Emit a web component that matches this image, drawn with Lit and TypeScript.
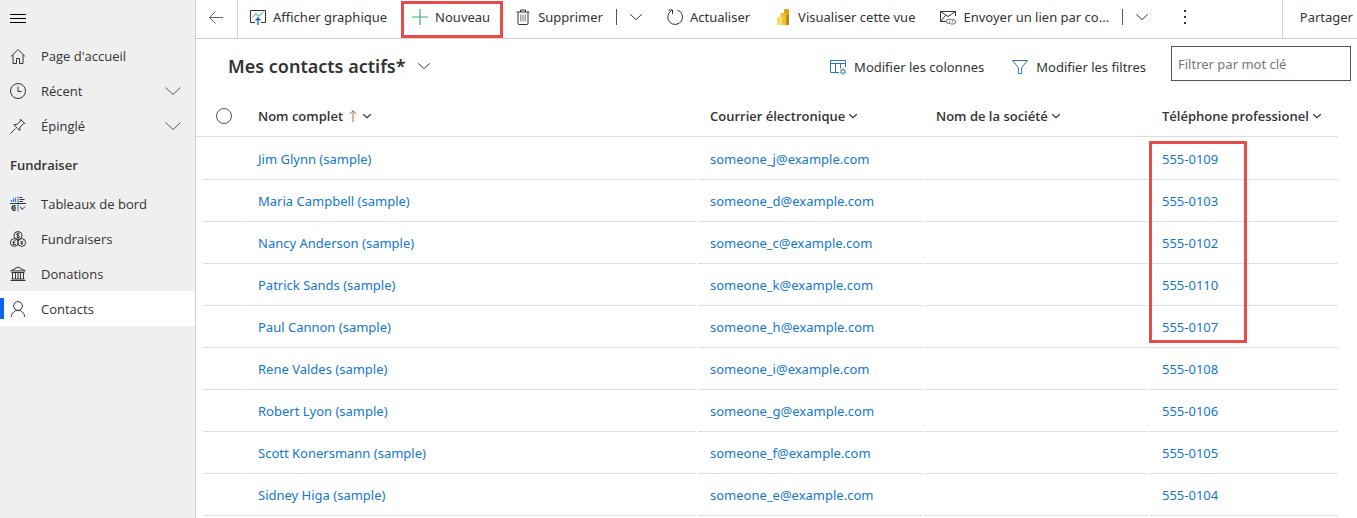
import { LitElement, html, css, svg, TemplateResult } from "lit";
import { customElement, property } from "lit/decorators.js";

const icons: Record<string, TemplateResult> = {
  menu: svg`<path d="M0 4.500h16M0 8.500h16M0 12.500h16" stroke="#000"/>`,
  home: svg`<path d="M1 8.500 8 1.500l7 7M3 7v8.500h3.500v-5h3v5H13V7"/>`,
  clock: svg`<circle cx="8" cy="8" r="7.500"/><path d="M8 3.500v5h3.500"/>`,
  pin: svg`<path d="M.5 15.500 5.500 10.500M10.500 1.200l4.300 4.300-1.600.300-3 3.200-.500 3.500-5.800-5.800 3.500-.500 3-3.200z"/>`,
  dash: svg`<path d="M8 .5v15" stroke="#3b79b7"/><path d="M0 7.500h16"/><path d="M1.500 6V4M3.500 6V2.500M5.500 6V1.500" stroke="#3b79b7" stroke-width="1.200"/><path d="M9.500 1.500h3M9.500 3.500h5M9.500 5.500h3.500"/><path d="M5.500 10a2.300 2.300 0 1 0 0 4M3.500 12h2.500" stroke-width="1.500"/><path d="m10 10.500 2.200 3L15 10.500"/>`,
  money: svg`<circle cx="8" cy="4.500" r="4"/><circle cx="4.300" cy="11.500" r="3.900"/><circle cx="11.700" cy="11.500" r="3.900"/><path d="M9.500 3c-1-1-3-.7-3 .4S9.500 4.500 9.500 5.700 7.300 7.200 6.400 6M8 1.500v6M5.800 10c-1.500-.8-2.600 0-2.400 1.500S3 13.500 3 13.500h3M2.500 11.600h2.500M10.200 9.700l1.500 1.800 1.500-1.800M11.700 11.500v2.500M10.300 12.200h2.800"/>`,
  bank: svg`<path d="M.7 4.900 8 1l7.300 3.900zM1.500 6.500h13M2.500 6.500v6.500M5.500 6.500v6.500M8 6.500v6.500M10.500 6.500v6.500M13.500 6.500v6.500M1.500 13h13M.5 14.500h15"/>`,
  person: svg`<circle cx="8" cy="5" r="4.400"/><path d="M1.300 16c.3-4 3-6.600 6.700-6.600s6.400 2.600 6.700 6.600"/>`,
  back: svg`<path d="M15 8.500H1.500M7.500 2.500l-6 6 6 6" stroke="#666"/>`,
  chart: svg`<path d="M5 13.500H.5v-12h15v12H11"/><path d="m2.500 8.500 3.500-4 2.500 3 5-4.500" stroke="#22a45d"/><path d="M8 16V9M5.500 11.500 8 9l2.500 2.500" stroke="#1160b7" stroke-width="1.300"/>`,
  plus: svg`<path d="M8 0v16M0 8h16" stroke="#3fb56d" stroke-width="1.200"/>`,
  trash: svg`<path d="M1.500 3h13M5.500 3V1h5v2M3 3v11.500c0 .6.400 1 1 1h8c.6 0 1-.4 1-1V3"/><path d="M5.800 5.500v7M8 5.500v7M10.200 5.500v7" stroke="#777"/>`,
  refresh: svg`<path d="M10.500 1a7.400 7.400 0 1 1-6 .600M1.500 1h4v4"/>`,
  bi: svg`<rect x="9" y="0" width="5" height="16" rx=".8" fill="#e0a512" stroke="none"/><path d="M11.500 6H14v9.200c0 .5-.4.800-1 .8h-1.500z" fill="#c27f0a" stroke="none"/><rect x="5.500" y="4" width="5.500" height="12" rx=".8" fill="#edc02f" stroke="none"/><rect x="2" y="8" width="5.500" height="8" rx=".8" fill="#f7dc65" stroke="none"/>`,
  mail: svg`<path d="M6 12.500H.5v-10h15v4.500M.5 2.500l7.500 5L15.500 2.500M.5 12.500l5-6"/><path d="M9.500 14.500H8.500a2 2 0 0 1 0-4.200h2a2 2 0 0 1 1.800 2.800M12.300 10.500h1a2.200 2.200 0 0 1 0 4.500h-2a2 2 0 0 1-1.700-2.800" stroke="#666"/>`,
  dots: svg`<g fill="#333" stroke="none"><rect x="7" y="1" width="2" height="2"/><rect x="7" y="7" width="2" height="2"/><rect x="7" y="13" width="2" height="2"/></g>`,
  columns: svg`<path d="M9 13.500H.5v-12h15V8M.5 4.500h15M5.500 4.500v9M10.500 4.500v5" stroke="#2b74b8"/><circle cx="13" cy="12.500" r="1.900" stroke="#2b74b8"/><path d="M13 9.200v1.400M13 14.400v1.400M10.200 10.900l1.200.7M14.600 13.400l1.200.7M10.200 14.100l1.200-.7M14.600 11.600l1.200-.7" stroke="#2b74b8"/>`,
  funnel: svg`<path d="M.5 1.500h15L9.700 8.500v6H6.300v-6z" stroke="#2b74b8"/>`,
  chevron: svg`<path d="m0.500 4.500 7.500 7 7.500-7"/>`,
  sort: svg`<path d="M8 16V1M3.500 5.500 8 1l4.500 4.500" stroke="#a8672f"/>`,
};

@customElement("ui-icon")
export class UiIcon extends LitElement {
  static styles = css`
    :host { display: block; width: 16px; height: 16px; flex: none; }
    :host([size="small"]) { width: 12px; height: 12px; }
    :host([size="tiny"]) { width: 8px; height: 8px; }
    svg { display: block; width: 100%; height: 100%; overflow: visible; fill: none; stroke: currentColor; }
    :host([size="tiny"]) svg { stroke-width: 2.4; }
    :host([size="small"]) svg { stroke-width: 1.3; }
  `;
  @property() name = "";
  @property({ reflect: true }) size = "";
  render() {
    return html`<svg viewBox="0 0 16 16" aria-hidden="true">${icons[this.name]}</svg>`;
  }
}

const contacts = [
  ["Jim Glynn", "j", "0109"],
  ["Maria Campbell", "d", "0103"],
  ["Nancy Anderson", "c", "0102"],
  ["Patrick Sands", "k", "0110"],
  ["Paul Cannon", "h", "0107"],
  ["Rene Valdes", "i", "0108"],
  ["Robert Lyon", "g", "0106"],
  ["Scott Konersmann", "f", "0105"],
  ["Sidney Higa", "e", "0104"],
];

@customElement("app-root")
export class AppRoot extends LitElement {
  static styles = css`
    :host {
      display: flex;
      height: 100vh;
      overflow: hidden;
      background: #fff;
      color: #333;
      font: 13px/20px "Noto Sans", "Open Sans", sans-serif;
    }
    * { box-sizing: border-box; }
    button { font: inherit; color: inherit; background: none; border: 0; padding: 0; display: flex; align-items: center; white-space: nowrap; }
    a { color: #1477cf; text-decoration: none; }
    .side { width: 196px; flex: none; background: #efefef; border-right: 1px solid #d2d2d2; font-family: "Open Sans", "Noto Sans", sans-serif; }
    .burger { height: 35px; padding: 0 10px; margin-bottom: 3px; }
    .nav { display: flex; align-items: center; gap: 15px; width: 100%; height: 35px; padding: 0 14px 0 10px; color: #333; }
    .nav .end { margin-left: auto; color: #4f5a68; }
    .group { margin: 0; padding: 1px 10px 0; font-size: 13px; font-weight: 600; line-height: 42px; }
    .current { background: linear-gradient(#0b65f6, #0b65f6) 0 7px / 4px 21px no-repeat #fff; }
    .main { flex: 1; min-width: 0; }
    .bar { display: flex; height: 39px; border-bottom: 1px solid #d2d2d2; }
    .back { width: 42px; padding: 0 0 4px 12px; border-right: 1px solid #d2d2d2; }
    .commands { flex: 1; display: flex; gap: 25px; padding: 0 12px 4px; }
    .cmd { gap: 7px; }
    .split { display: flex; gap: 13px; align-items: center; }
    .rule { width: 1px; height: 16px; background: #555; }
    .more { padding-left: 4px; }
    .marked { position: relative; }
    .marked::after { content: ""; position: absolute; inset: 1px -13px -4px -11px; border: 3px solid #e84c48; }
    .share { padding: 0 4px 4px 17px; border-left: 1px solid #d2d2d2; }
    .head { display: flex; align-items: center; height: 57px; padding: 0 6px 2px 32px; }
    .title { margin: 0; font-size: 18px; line-height: 26px; font-weight: 600; }
    .view { gap: 12px; margin-right: auto; padding-bottom: 2px; }
    .tools { display: flex; gap: 28px; margin-right: 25px; }
    .tools .cmd { gap: 8px; }
    .filter { width: 180px; height: 35px; margin-bottom: 6px; padding: 0 6px; border: 1px solid #555; font: inherit; color: #333; }
    .filter::placeholder { color: #767676; opacity: 1; }
    table { width: calc(100% - 19px); table-layout: fixed; border-collapse: separate; border-spacing: 0; }
    .c-check { width: 50px; }
    .c-data { width: 226px; }
    .c-phone { width: 188px; }
    th { height: 41px; padding: 0 0 0 12px; border-bottom: 1px solid #dedede; text-align: left; font-weight: 600; font-family: "Open Sans", "Noto Sans", sans-serif; }
    th:first-child { padding: 0 0 0 20px; }
    th button { gap: 4px; }
    .check { display: block; appearance: none; width: 16px; height: 16px; margin: 0; border: 1px solid #555; border-radius: 50%; }
    td { height: 42px; padding: 0 0 0 12px; background: linear-gradient(#dedede, #dedede) 0 100% / calc(100% - 2px) 1px no-repeat; }
    td:first-child { background-position: 7px 100%; background-size: calc(100% - 8px) 1px; }
    td:last-child { background-size: 100% 1px; }
    tbody tr:first-child td { height: 43px; }
    .start { position: relative; }
    .frame { position: absolute; left: -1px; top: 4px; width: 98px; height: 202px; border: 3px solid #e84c48; pointer-events: none; }
  `;

  private nav(icon: string, label: string, extra = "", open = false) {
    return html`<a class="nav ${extra}" href="#"><ui-icon name=${icon}></ui-icon>${label}
      ${open ? html`<ui-icon class="end" name="chevron"></ui-icon>` : ""}</a>`;
  }

  private cmd(icon: string, label: string, extra = "") {
    return html`<button class="cmd ${extra}"><ui-icon name=${icon}></ui-icon>${label}</button>`;
  }

  private split(icon: string, label: string) {
    return html`<div class="split">${this.cmd(icon, label)}<span class="rule"></span>
      <button aria-label="Plus"><ui-icon name="chevron" size="small"></ui-icon></button></div>`;
  }

  private column(label: string, sorted = false) {
    return html`<th scope="col"><button>${label}${sorted ? html`<ui-icon name="sort" size="small"></ui-icon>` : ""}<ui-icon name="chevron" size="tiny"></ui-icon></button></th>`;
  }

  render() {
    return html`
      <nav class="side">
        <button class="burger" aria-label="Menu"><ui-icon name="menu"></ui-icon></button>
        ${this.nav("home", "Page d'accueil")}
        ${this.nav("clock", "Récent", "", true)}
        ${this.nav("pin", "Épinglé", "", true)}
        <h2 class="group">Fundraiser</h2>
        ${this.nav("dash", "Tableaux de bord")}
        ${this.nav("money", "Fundraisers")}
        ${this.nav("bank", "Donations")}
        ${this.nav("person", "Contacts", "current")}
      </nav>
      <main class="main">
        <div class="bar">
          <button class="back" aria-label="Retour"><ui-icon name="back"></ui-icon></button>
          <div class="commands">
            ${this.cmd("chart", "Afficher graphique")}
            ${this.cmd("plus", "Nouveau", "marked")}
            ${this.split("trash", "Supprimer")}
            ${this.cmd("refresh", "Actualiser")}
            ${this.cmd("bi", "Visualiser cette vue")}
            ${this.split("mail", "Envoyer un lien par co...")}
            <button class="more" aria-label="Autres commandes"><ui-icon name="dots"></ui-icon></button>
          </div>
          <button class="share">Partager</button>
        </div>
        <div class="head">
          <button class="view"><h1 class="title">Mes contacts actifs*</h1><ui-icon name="chevron" size="small"></ui-icon></button>
          <div class="tools">
            ${this.cmd("columns", "Modifier les colonnes")}
            ${this.cmd("funnel", "Modifier les filtres")}
          </div>
          <input class="filter" type="search" aria-label="Filtrer par mot clé" placeholder="Filtrer par mot clé" />
        </div>
        <table>
          <colgroup><col class="c-check" /><col /><col class="c-data" /><col class="c-data" /><col class="c-phone" /></colgroup>
          <thead>
            <tr>
              <th><input class="check" type="checkbox" aria-label="Tout sélectionner" /></th>
              ${this.column("Nom complet", true)} ${this.column("Courrier électronique")}
              ${this.column("Nom de la société")} ${this.column("Téléphone professionel")}
            </tr>
          </thead>
          <tbody>
            ${contacts.map(([name, mail, phone], i) => html`<tr>
              <td></td>
              <td><a href="#">${name} (sample)</a></td>
              <td><a href="#">someone_${mail}@example.com</a></td>
              <td></td>
              <td class=${i === 0 ? "start" : ""}><a href="#">555-${phone}</a>${i === 0 ? html`<span class="frame"></span>` : ""}</td>
            </tr>`)}
          </tbody>
        </table>
      </main>
    `;
  }
}
